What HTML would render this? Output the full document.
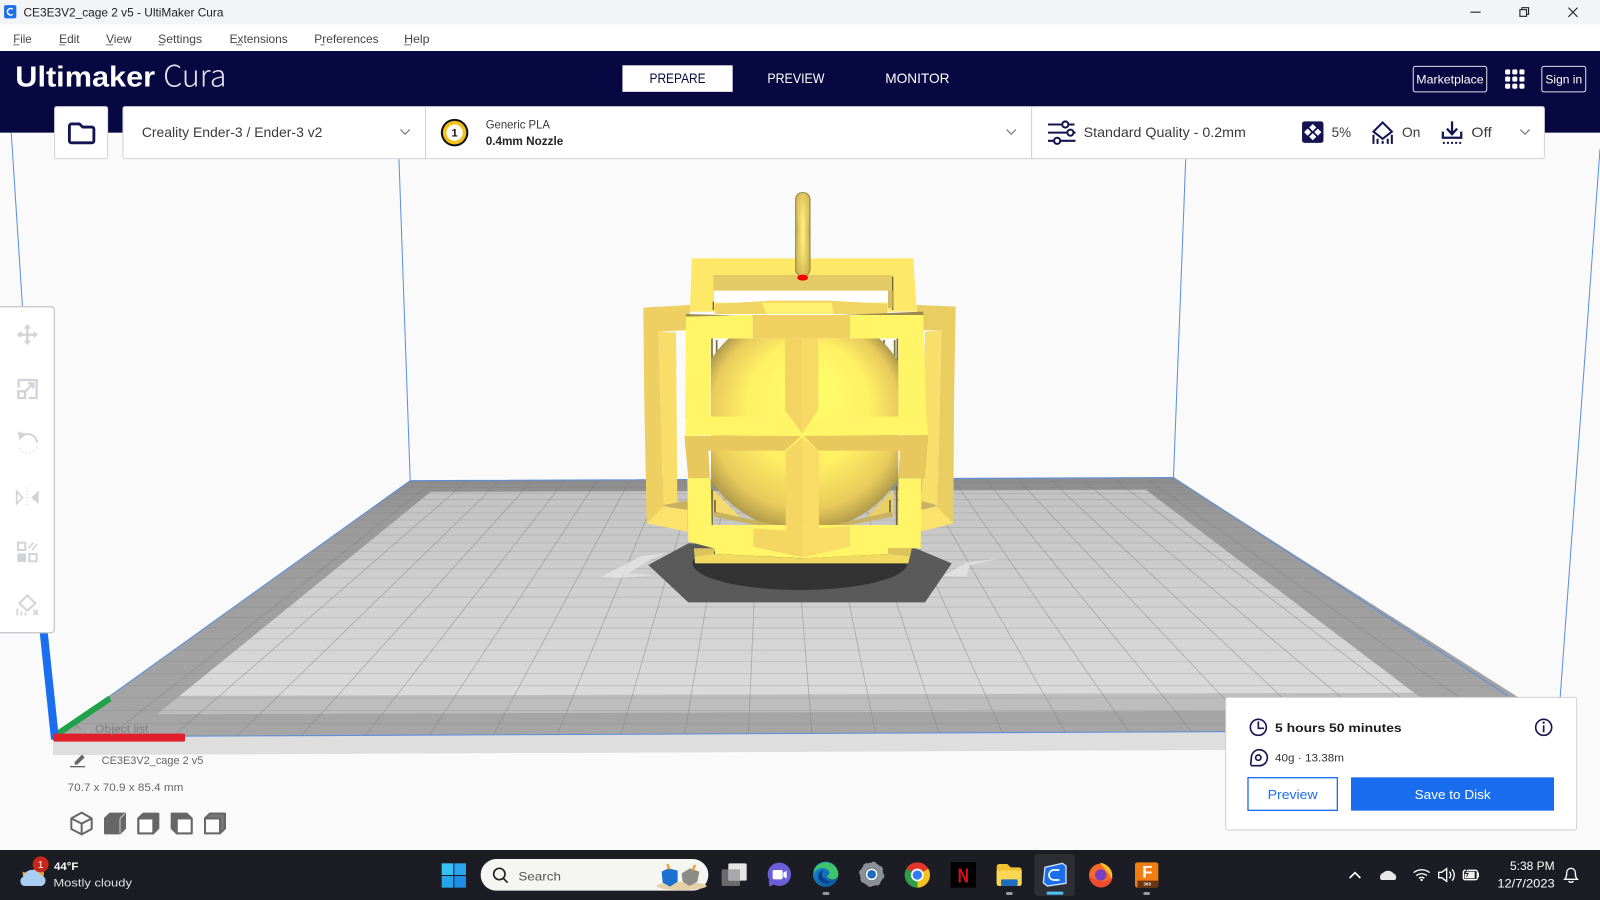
<!DOCTYPE html>
<html lang="en">
<head>
<meta charset="utf-8">
<title>CE3E3V2_cage 2 v5 - UltiMaker Cura</title>
<style>
html,body{margin:0;padding:0;background:#fafafa;width:1600px;height:900px;overflow:hidden}
svg{display:block;font-family:"Liberation Sans",sans-serif}
</style>
</head>
<body>
<svg xmlns="http://www.w3.org/2000/svg" width="1600" height="900" viewBox="0 0 1568 882">
<defs>
<clipPath id="bedclip"><polygon points="52,722 402,471 1150,468 1539,716"/></clipPath>
<clipPath id="sphereclip"><rect x="333" y="505" width="562" height="600"/></clipPath>
<linearGradient id="bedDark" x1="0" y1="0" x2="0" y2="1"><stop offset="0" stop-color="#8c8c8c"/><stop offset=".15" stop-color="#9a9a9a"/><stop offset="1" stop-color="#a6a6a6"/></linearGradient>
<linearGradient id="bedLight" x1="0" y1="0" x2="0" y2="1"><stop offset="0" stop-color="#c2c2c2"/><stop offset=".5" stop-color="#d0d0d0"/><stop offset="1" stop-color="#dadada"/></linearGradient>
<radialGradient id="sphere" cx="612" cy="750" r="333" gradientUnits="userSpaceOnUse" fx="640" fy="640">
<stop offset="0" stop-color="#ffff6a"/><stop offset=".55" stop-color="#fff064"/><stop offset=".85" stop-color="#e8cb5c"/><stop offset="1" stop-color="#b09a4a"/></radialGradient>
<linearGradient id="ring" x1="0" y1="0" x2="1" y2="0"><stop offset="0" stop-color="#c2a64e"/><stop offset=".5" stop-color="#fff27c"/><stop offset="1" stop-color="#c2a64e"/></linearGradient>
<linearGradient id="ringv" x1="0" y1="0" x2="0" y2="1"><stop offset="0" stop-color="#d8b850" stop-opacity=".8"/><stop offset=".45" stop-color="#fff27c" stop-opacity="0"/><stop offset="1" stop-color="#c8a848" stop-opacity=".7"/></linearGradient>
<linearGradient id="edge" x1="0" y1="0" x2="1" y2="1"><stop offset="0" stop-color="#1a8fd8"/><stop offset="1" stop-color="#0a4f96"/></linearGradient>
</defs>

<rect width="1568" height="882" fill="#fafafa"/>

<!-- build volume lines -->
<g stroke="#5a8fe2" stroke-width="1" fill="none">
<path d="M11 130L22 300M391 156L402 471M1162 156L1150 468M1568 146L1529 683"/>
</g>

<!-- lip -->
<polygon points="52,722 1205,717 1205,735 52,740" fill="#dedede"/>

<!-- bed -->
<polygon points="52,722 402,471 1150,468 1539,716" fill="url(#bedDark)"/>
<polygon points="154,700 176,682 1386,679 1410,696" fill="#bdbdbd"/>
<polygon points="176,682 422,482 1123,480 1386,679" fill="url(#bedLight)"/>
<g clip-path="url(#bedclip)" stroke="#7d7d7d" stroke-width=".8" stroke-opacity=".5" fill="none">
<path d="M394.4 471L43.6 722M426.2 471L106.3 722M458 471L169 722M489.8 471L231.7 722M521.6 471L294.4 722M553.4 471L357.1 722M585.2 471L419.8 722M617 471L482.5 722M648.8 471L545.2 722M680.6 471L607.9 722M712.4 471L670.6 722M744.2 471L733.3 722M776 471L796 722M807.8 471L858.7 722M839.6 471L921.4 722M871.4 471L984.1 722M903.2 471L1046.8 722M935 471L1109.5 722M966.8 471L1172.2 722M998.6 471L1234.9 722M1030.4 471L1297.6 722M1062.2 471L1360.3 722M1094 471L1423 722M1125.8 471L1485.7 722M1157.6 471L1548.4 722"/>
<path stroke-opacity=".3" d="M0 709H1568M0 696.3H1568M0 683.9H1568M0 671.8H1568M0 660H1568M0 648.4H1568M0 637.1H1568M0 626.1H1568M0 615.4H1568M0 605H1568M0 594.9H1568M0 585.1H1568M0 575.6H1568M0 566.3H1568M0 557.3H1568M0 548.6H1568M0 540.2H1568M0 532.1H1568M0 524.3H1568M0 516.8H1568M0 509.6H1568M0 502.7H1568M0 496H1568M0 489.6H1568M0 483.5H1568M0 477.7H1568M0 472.2H1568"/>
</g>
<path d="M52 722L402 471L1150 468L1478 682M52 722L1205 717" stroke="#5a8fe2" stroke-width="1" fill="none"/>

<!-- model : coordinates are 3x from (600,170) -->
<g transform="matrix(.32667 0 0 .32667 588 166.6)">
<!-- white streaks on bed -->
<polygon points="0,1222 125,1158 195,1150 150,1170 85,1210 160,1216 60,1224" fill="#e6e6e6" opacity=".75"/>
<polygon points="1030,1218 1100,1178 1200,1165 1110,1185 1100,1220" fill="#e6e6e6" opacity=".75"/>
<!-- shadow -->
<polygon points="145,1185 265,1120 935,1130 1055,1180 975,1297 265,1297" fill="#5a5a5a"/>
<ellipse cx="600" cy="1180" rx="322" ry="80" fill="#333"/>
<!-- side frames -->
<polygon points="130,413 270,405 270,480 175,485 190,1010 140,1060 133,700" fill="#edcf62"/>
<polygon points="175,485 228,488 232,1012 190,1010" fill="#f8dd68"/>
<polygon points="185,1006 262,992 262,1022" fill="#c9b160"/>
<polygon points="140,1060 190,1010 262,1020 262,1085" fill="#fbe26c"/>
<polygon points="1067,410 950,405 950,480 1025,482 1012,1010 1060,1060 1062,700" fill="#eacd60"/>
<polygon points="975,485 1025,482 1012,1010 965,1010" fill="#f8de6a"/>
<polygon points="1012,1006 960,992 960,1022" fill="#c9b160"/>
<polygon points="1060,1060 1012,1010 960,1020 960,1085" fill="#fbe26c"/>
<!-- back top frame -->
<polygon points="275,265 940,265 950,425 270,425" fill="#fde868"/>
<rect x="340" y="315" width="538" height="47" fill="#e4ca64"/>
<rect x="342" y="362" width="524" height="36" fill="#fff"/>
<polygon points="345,402 510,392 690,392 862,402 862,432 345,432" fill="#f0d562"/>
<polygon points="485,398 695,398 700,432 500,432" fill="#fff272"/>
<path d="M340 395V420M878 320V420" stroke="#6f6438" stroke-width="4"/>
<rect x="864" y="362" width="14" height="52" fill="#d5bc60"/>
<!-- ring -->
<rect x="587" y="68" width="43" height="250" rx="20" fill="url(#ring)" stroke="#8f8044" stroke-width="3"/>
<rect x="589" y="70" width="39" height="246" rx="18" fill="url(#ringv)"/>
<ellipse cx="608" cy="323" rx="16" ry="9" fill="#f50000"/>
<!-- window background details -->
<path d="M336 505V740M892 505V745M350 510V560M852 510V570M884 510V600" stroke="#7a6f40" stroke-width="5" fill="none"/>
<polygon points="340,960 420,1040 340,1040" fill="#f5d96c"/>
<polygon points="880,960 800,1040 880,1040" fill="#e8cf66"/>
<!-- sphere -->
<g clip-path="url(#sphereclip)"><circle cx="612" cy="750" r="333" fill="url(#sphere)"/></g>
<path d="M336 960V1065M890 950V1065M345 990V1040M870 990V1040" stroke="#6f6438" stroke-width="5" fill="none"/>
<polygon points="345,1025 555,1070 555,1082 340,1040" fill="#c9b162"/>
<polygon points="655,1075 875,1025 880,1040 660,1082" fill="#c9b162"/>
<!-- front frame -->
<polygon points="258,440 600,440 970,425 970,435 600,442 258,432" fill="#9a8a52"/>
<polygon points="258,440 458,435 458,505 332,505 332,740 255,745" fill="#fff566"/>
<polygon points="750,435 970,435 978,745 895,745 895,505 750,505" fill="#fff566"/>
<polygon points="458,435 750,435 750,505 458,505" fill="#efd060"/>
<polygon points="555,505 607,505 607,790 555,720" fill="#f3d462"/>
<polygon points="607,505 655,505 655,720 607,790" fill="#f7da66"/>
<polygon points="258,740 555,740 605,790 255,798" fill="#fff566"/>
<polygon points="655,740 980,740 985,795 610,795" fill="#fff566"/>
<polygon points="253,798 603,798 555,842 325,842 330,925 265,925" fill="#e8c85c"/>
<polygon points="612,798 985,795 975,925 895,925 900,842 655,842" fill="#e8c85c"/>
<polygon points="262,925 332,925 335,1065 895,1065 895,925 965,925 962,1135 865,1135 865,1152 610,1165 345,1152 342,1135 265,1115" fill="#fff566"/>
<polygon points="282,1135 342,1135 342,1152 605,1165 865,1152 865,1135 935,1135 925,1180 285,1180" fill="#f2da60"/>
<polygon points="282,1135 342,1135 342,1152 285,1160" fill="#dcc45c"/>
<polygon points="865,1135 935,1135 930,1160 865,1152" fill="#dcc45c"/>
<polygon points="557,845 607,802 607,1162 460,1130 460,1075 557,1082" fill="#f4d662"/>
<polygon points="607,802 657,845 657,1075 750,1068 750,1130 607,1162" fill="#f8dc66"/>
</g>

<!-- axis + object list : 3x from (0,680) -->
<g transform="matrix(.32667 0 0 .32667 0 666.4)">
<line x1="175" y1="160" x2="330" y2="55" stroke="#1fa24a" stroke-width="18"/>
<line x1="131" y1="-145" x2="165" y2="178" stroke="#1a6ef0" stroke-width="24"/>
<rect x="160" y="161" width="395" height="24" rx="5" fill="#e01f2a"/>
<path d="M222 148L232 138L242 148" stroke="#8b8b8b" stroke-width="3" fill="none"/>
<text x="285" y="158" font-size="33" fill="#808080" textLength="160" lengthAdjust="spacingAndGlyphs">Object list</text>
<path d="M224 246L246 224L254 232L232 254H224Z" fill="#666"/><rect x="210" y="258" width="45" height="4" fill="#666"/>
<text x="305" y="252" font-size="33" fill="#666" textLength="305" lengthAdjust="spacingAndGlyphs">CE3E3V2_cage 2 v5</text>
<text x="203" y="333" font-size="33" fill="#666" textLength="347" lengthAdjust="spacingAndGlyphs">70.7 x 70.9 x 85.4 mm</text>
<g stroke="#666" stroke-width="6" fill="none" stroke-linejoin="round">
<path d="M245 398L275 415V447L245 463L214 447V415ZM214 415L245 431L275 415M245 431V463"/>
<path d="M315 415L330 401H375V445L360 460H315Z" fill="#666"/><path d="M360 415V460M360 415L375 401" stroke="#fff" stroke-width="2"/>
<path d="M415 415L430 401H475V445L460 460H415Z" fill="#666"/><rect x="418" y="418" width="40" height="40" fill="#fff" stroke="none"/><path d="M415 415H460V460H415Z"/>
<path d="M515 401H560L575 415V460H530L515 445Z" fill="#666"/><rect x="533" y="418" width="40" height="40" fill="#fff" stroke="none"/><path d="M530 415H575V460H530Z"/>
<path d="M615 415L630 401H675V445L660 460H615Z"/><path d="M615 415H660V460M660 415L675 401"/><path d="M630 401H675V445L660 460V415H615Z" fill="#777"/>
</g>
</g>

<!-- left toolbar : 3x from (0,300) -->
<g transform="matrix(.32667 0 0 .32667 0 294)">
<rect x="-10" y="20" width="173" height="978" rx="10" fill="#fff" stroke="#c9cacf" stroke-width="4"/>
<g stroke="#d2d3d8" fill="none" stroke-width="7">
<path d="M60 104H104M82 82V126"/>
<path fill="#d2d3d8" stroke="none" d="M82 72L93 86H71ZM82 136L71 122H93ZM50 104L64 93V115ZM114 104L100 115V93Z"/>
<path d="M56 262V240H110V294H86"/><path d="M72 278L100 250M84 250H100V266"/><rect x="55" y="274" width="20" height="20"/>
<path d="M62 410A30 30 0 0 1 112 428" stroke-width="6"/><path fill="#d2d3d8" stroke="none" d="M54 394L80 402L58 420Z"/>
<path d="M110 442A30 30 0 0 1 54 436" stroke-dasharray="3 9" stroke-width="5"/>
<path d="M81 562V622" stroke-dasharray="3 7" stroke-width="4"/>
<path stroke-width="5" d="M50 574L68 593L50 611Z"/><path fill="#d2d3d8" stroke="none" d="M116 572V612L94 593Z"/>
<rect x="54" y="728" width="22" height="22" stroke-width="6"/><path stroke-width="5" d="M85 745L100 728M96 750L112 732"/>
<rect x="52" y="760" width="26" height="26" rx="3" fill="#d2d3d8" stroke="none"/><rect x="88" y="762" width="22" height="22" stroke-width="6"/>
<path d="M82 886L106 910L82 932L58 910Z" stroke-width="6"/>
<path d="M52 925V946M64 934V946M76 938V946" stroke-width="5"/><path d="M100 930L114 945M114 930L100 945" stroke-width="5"/>
</g>
</g>

<!-- title bar -->
<rect x="0" y="0" width="1568" height="24" fill="#f2f4f7"/>
<rect x="4" y="5" width="12" height="13" rx="2" fill="#1c6fe8"/>
<path d="M12.5 9A3.2 3.2 0 1 0 12.5 14" stroke="#fff" stroke-width="1.5" fill="none"/>
<text x="23" y="16" font-size="12" fill="#222" textLength="196" lengthAdjust="spacingAndGlyphs">CE3E3V2_cage 2 v5 - UltiMaker Cura</text>
<path d="M1441 12H1451M1537 7.5L1546 16.5M1546 7.5L1537 16.5" stroke="#222" stroke-width="1.1" fill="none"/>
<path d="M1489.5 9.5H1496V16H1489.5ZM1491.5 9.5V7.5H1498V14H1496" stroke="#222" stroke-width="1.1" fill="none"/>

<!-- menu bar -->
<rect x="0" y="24" width="1568" height="26" fill="#fff"/>
<g font-size="12" fill="#444">
<text x="13" y="42" textLength="18" lengthAdjust="spacingAndGlyphs">File</text>
<text x="58" y="42" textLength="20" lengthAdjust="spacingAndGlyphs">Edit</text>
<text x="104" y="42" textLength="25" lengthAdjust="spacingAndGlyphs">View</text>
<text x="155" y="42" textLength="43" lengthAdjust="spacingAndGlyphs">Settings</text>
<text x="225" y="42" textLength="57" lengthAdjust="spacingAndGlyphs">Extensions</text>
<text x="308" y="42" textLength="63" lengthAdjust="spacingAndGlyphs">Preferences</text>
<text x="396" y="42" textLength="25" lengthAdjust="spacingAndGlyphs">Help</text>
</g>
<path d="M13 44H19M58 44H64M104 44H111M155 44H161M231 44H237M314 44H318M396 44H403" stroke="#444" stroke-width=".8"/>

<!-- header -->
<rect x="0" y="50" width="1568" height="80" fill="#070841"/>
<text x="15" y="85" font-size="28" font-weight="700" fill="#fff" textLength="137" lengthAdjust="spacingAndGlyphs">Ultimaker</text>
<text x="160" y="85" font-size="29" fill="#e4e5ee" textLength="62" lengthAdjust="spacingAndGlyphs" style='font-family:"Noto Sans CJK JP","Liberation Sans",sans-serif;font-weight:300'>Cura</text>
<rect x="610" y="64" width="108" height="26" fill="#fff"/>
<text x="664" y="81.5" font-size="14" fill="#070841" text-anchor="middle" textLength="55" lengthAdjust="spacingAndGlyphs">PREPARE</text>
<text x="780" y="81.5" font-size="14" fill="#fff" text-anchor="middle" textLength="56" lengthAdjust="spacingAndGlyphs">PREVIEW</text>
<text x="899" y="81.5" font-size="14" fill="#fff" text-anchor="middle" textLength="63" lengthAdjust="spacingAndGlyphs">MONITOR</text>
<rect x="1385" y="65" width="72" height="25" rx="2" fill="none" stroke="#dfe0ea"/>
<text x="1421" y="82" font-size="12" fill="#fff" text-anchor="middle" textLength="66" lengthAdjust="spacingAndGlyphs">Marketplace</text>
<g fill="#fff">
<rect x="1475" y="68" width="5" height="5" rx="1.5"/><rect x="1482" y="68" width="5" height="5" rx="1.5"/><rect x="1489" y="68" width="5" height="5" rx="1.5"/>
<rect x="1475" y="75" width="5" height="5" rx="1.5"/><rect x="1482" y="75" width="5" height="5" rx="1.5"/><rect x="1489" y="75" width="5" height="5" rx="1.5"/>
<rect x="1475" y="82" width="5" height="5" rx="1.5"/><rect x="1482" y="82" width="5" height="5" rx="1.5"/><rect x="1489" y="82" width="5" height="5" rx="1.5"/>
</g>
<rect x="1511" y="65" width="43" height="25" rx="2" fill="none" stroke="#dfe0ea"/>
<text x="1532.5" y="82" font-size="12" fill="#fff" text-anchor="middle" textLength="36" lengthAdjust="spacingAndGlyphs">Sign in</text>

<!-- top selectors -->
<rect x="53.5" y="104.5" width="52" height="51" rx="2" fill="#fff" stroke="#d2d2d6"/>
<path d="M68 123.5A2 2 0 0 1 70 121.5H78L81 124.5H90A2 2 0 0 1 92 126.5V138A2 2 0 0 1 90 140H70A2 2 0 0 1 68 138Z" fill="none" stroke="#141550" stroke-width="2.8" stroke-linejoin="round"/>
<rect x="120.5" y="104.5" width="1393" height="51" rx="2" fill="#fff" stroke="#d2d2d6"/>
<path d="M417 104V156M1011 104V156" stroke="#cfcfd4" stroke-width="1"/>
<text x="139" y="134.5" font-size="14" fill="#3a3a3a" textLength="177" lengthAdjust="spacingAndGlyphs">Creality Ender-3 / Ender-3 v2</text>
<path d="M392.5 127L397 131.5L401.5 127M986.5 127L991 131.5L995.5 127M1490 127L1494.5 131.5L1499 127" stroke="#777" stroke-width="1.2" fill="none"/>
<circle cx="445.5" cy="130" r="13.5" fill="#111"/>
<circle cx="445.5" cy="130" r="11.5" fill="#f2c21a"/>
<circle cx="445.5" cy="130" r="8" fill="#fff"/>
<text x="445.5" y="134" font-size="11" font-weight="700" fill="#111" text-anchor="middle">1</text>
<text x="476" y="126" font-size="11.5" fill="#3a3a3a" textLength="63" lengthAdjust="spacingAndGlyphs">Generic PLA</text>
<text x="476" y="142" font-size="12" fill="#222" font-weight="700" textLength="76" lengthAdjust="spacingAndGlyphs">0.4mm Nozzle</text>
<g stroke="#141550" stroke-width="2" fill="none">
<path d="M1027 122H1041M1047 122H1053M1027 130H1046M1052 130H1054M1027 138H1033M1039 138H1054"/>
<circle cx="1044" cy="122" r="3"/><circle cx="1049" cy="130" r="3"/><circle cx="1036" cy="138" r="3"/>
</g>
<text x="1062" y="134.5" font-size="14" fill="#3a3a3a" textLength="159" lengthAdjust="spacingAndGlyphs">Standard Quality - 0.2mm</text>
<rect x="1276" y="119" width="21" height="21" rx="2.5" fill="#141550"/>
<path fill="#fff" d="M1286.5 121.5L1290 125L1286.5 128.5L1283 125ZM1286.5 130.5L1290 134L1286.5 137.5L1283 134ZM1281.5 126L1285 129.5L1281.5 133L1278 129.5ZM1291.5 126L1295 129.5L1291.5 133L1288 129.5Z"/>
<text x="1305" y="134.5" font-size="14" fill="#3a3a3a" textLength="19" lengthAdjust="spacingAndGlyphs">5%</text>
<path d="M1355 120L1364 129L1355 136L1346 129Z" fill="none" stroke="#141550" stroke-width="2"/>
<path d="M1346 132V141M1350 136V141M1355 138V141M1360 136V141M1364 132V141" stroke="#141550" stroke-width="2"/>
<text x="1374" y="134.5" font-size="14" fill="#3a3a3a" textLength="18" lengthAdjust="spacingAndGlyphs">On</text>
<path d="M1423 119V131M1418 126L1423 131.5L1428 126M1414 129V135H1432V129" fill="none" stroke="#141550" stroke-width="2.2"/>
<path d="M1414 140H1433" stroke="#141550" stroke-width="2" stroke-dasharray="2 2"/>
<text x="1442" y="134.5" font-size="14" fill="#3a3a3a" textLength="20" lengthAdjust="spacingAndGlyphs">Off</text>

<!-- taskbar -->
<rect x="0" y="833" width="1568" height="49" fill="#1c1c24"/>

<!-- print panel + tray : 3x from (1200,680) -->
<g transform="matrix(.32667 0 0 .32667 1176 666.4)">
<rect x="77" y="52" width="1053" height="398" rx="6" fill="#fff" stroke="#cfcfd3" stroke-width="3"/>
<g stroke="#1a1850" fill="none" stroke-width="5">
<circle cx="175" cy="142" r="24"/><path d="M175 124V145H192"/>
<circle cx="1031" cy="142" r="24"/>
<path d="M152 255L154 233A24 24 0 1 1 175 257H152"/>
<circle cx="175" cy="233" r="8"/>
</g>
<path d="M1031 136V157" stroke="#1a1850" stroke-width="5"/><circle cx="1031" cy="128" r="3.5" fill="#1a1850"/>
<text x="225" y="156" font-size="37" font-weight="700" fill="#1a1a1a" textLength="380" lengthAdjust="spacingAndGlyphs">5 hours 50 minutes</text>
<text x="225" y="245" font-size="33" fill="#333" textLength="207" lengthAdjust="spacingAndGlyphs">40g · 13.38m</text>
<rect x="144" y="293" width="268" height="98" fill="#fff" stroke="#1a6ef0" stroke-width="4"/>
<text x="278" y="357" font-size="38" fill="#1a6ef0" text-anchor="middle" textLength="150" lengthAdjust="spacingAndGlyphs">Preview</text>
<rect x="453" y="292" width="609" height="100" fill="#196ef0"/>
<text x="758" y="357" font-size="38" fill="#fff" text-anchor="middle" textLength="228" lengthAdjust="spacingAndGlyphs">Save to Disk</text>
<path d="M449 594L465 578L481 594" fill="none" stroke="#fff" stroke-width="5"/>
<path d="M543 600A14 14 0 0 1 550 578A20 20 0 0 1 580 580A12 12 0 0 1 585 600Z" fill="#e8e8ec"/>
<g fill="none" stroke="#fff" stroke-width="4">
<path d="M641 578A38 38 0 0 1 689 578M649 587A25 25 0 0 1 681 587M657 595A12 12 0 0 1 673 595"/>
<path d="M716 577H725L740 566V604L725 593H716ZM748 575A14 14 0 0 1 748 595M756 568A25 25 0 0 1 756 602"/>
<rect x="790" y="571" width="42" height="28" rx="5"/>
<path d="M835 578V592"/>
</g>
<circle cx="665" cy="600" r="3.5" fill="#fff"/>
<rect x="794" y="575" width="30" height="20" fill="#eee"/>
<path d="M804 560L795 580H804L800 590" stroke="#1c1c24" stroke-width="3" fill="none"/>
<text x="1064" y="570" font-size="36" fill="#fff" text-anchor="end" textLength="134" lengthAdjust="spacingAndGlyphs">5:38 PM</text>
<text x="1064" y="622" font-size="36" fill="#fff" text-anchor="end" textLength="172" lengthAdjust="spacingAndGlyphs">12/7/2023</text>
<path d="M1094 598C1100 592 1100 585 1100 578A13 13 0 0 1 1126 578C1126 585 1126 592 1132 598ZM1106 603A8 8 0 0 0 1120 603" fill="none" stroke="#fff" stroke-width="4"/>
</g>

<!-- weather -->
<g transform="matrix(.32667 0 0 .32667 0 666.4)">
<path d="M68 575A28 28 0 0 0 108 548A32 32 0 1 1 68 575Z" fill="#f4a72a"/>
<path d="M72 618A15 15 0 0 1 70 590A28 28 0 0 1 122 585A17 17 0 0 1 125 618Z" fill="#a9cdf0"/>
<circle cx="122" cy="553" r="24" fill="#c8281c"/>
<text x="122" y="564" font-size="30" fill="#fff" text-anchor="middle">1</text>
<text x="162" y="570" font-size="33" fill="#fff" font-weight="700" textLength="73" lengthAdjust="spacingAndGlyphs">44°F</text>
<text x="160" y="620" font-size="34" fill="#e0e0e2" textLength="236" lengthAdjust="spacingAndGlyphs">Mostly cloudy</text>
</g>

<!-- taskbar centre : 3x from (420,840) -->
<g transform="matrix(.32667 0 0 .32667 411.6 823.2)">
<rect x="65" y="70" width="35" height="35" fill="#37c0f5"/><rect x="103" y="70" width="35" height="35" fill="#2ba4ee"/>
<rect x="65" y="108" width="35" height="35" fill="#25a5ec"/><rect x="103" y="108" width="35" height="35" fill="#1c8fe4"/>
<rect x="182" y="57" width="683" height="95" rx="47" fill="#f5f5f2"/>
<circle cx="238" cy="102" r="17" fill="none" stroke="#222" stroke-width="5"/>
<path d="M250 115L263 128" stroke="#222" stroke-width="5"/>
<text x="295" y="122" font-size="36" fill="#555" textLength="128" lengthAdjust="spacingAndGlyphs">Search</text>
<ellipse cx="785" cy="138" rx="75" ry="12" fill="#e5cfa5"/>
<path d="M725 95L745 85L773 92V125L750 140L728 128Z" fill="#1d6fd0"/>
<path d="M742 72L748 88" stroke="#e8a030" stroke-width="7"/>
<path d="M785 100L810 85L838 95L832 125L808 138L788 125Z" fill="#8c8c86"/>
<path d="M825 75L818 92" stroke="#e8a030" stroke-width="7"/>
<rect x="905" y="88" width="55" height="50" rx="4" fill="#6a6a6e"/>
<rect x="925" y="70" width="55" height="52" rx="4" fill="#e6e6e8"/>
<rect x="925" y="88" width="35" height="34" fill="#a8a8ac"/>
<circle cx="1078" cy="103" r="35" fill="#6a5fd8"/>
<path d="M1046 120L1048 140L1065 132Z" fill="#6a5fd8"/>
<rect x="1058" y="90" width="30" height="28" rx="5" fill="#fff"/>
<path d="M1090 98L1100 92V116L1090 110Z" fill="#fff"/>
</g>

<!-- taskbar apps : 3x from (800,840) -->
<g transform="matrix(.32667 0 0 .32667 784 823.2)">
<rect x="703" y="42" width="122" height="126" rx="9" fill="#2d2d35"/>
<circle cx="77" cy="103" r="38" fill="url(#edge)"/>
<path d="M42 90A38 38 0 0 1 115 105C112 122 85 122 80 108C100 100 78 78 60 85C50 88 45 92 42 100Z" fill="#3ec46d"/>
<path d="M62 125C48 112 55 92 72 90C60 100 65 120 92 125C85 132 72 132 62 125Z" fill="#0d3f8a"/>
<circle cx="215" cy="103" r="27" fill="none" stroke="#8c9098" stroke-width="16"/>
<circle cx="215" cy="103" r="34" fill="none" stroke="#8c9098" stroke-width="8" stroke-dasharray="12 14.7"/>
<circle cx="215" cy="103" r="18" fill="#fff"/>
<circle cx="215" cy="103" r="13" fill="#1d6cc0"/>
<path d="M352 105L319.1 86A38 38 0 0 1 384.9 86Z" fill="#e0362c"/>
<path d="M352 105L352 143A38 38 0 0 1 319.1 86Z" fill="#2f9e48"/>
<path d="M352 105L384.9 86A38 38 0 0 1 352 143Z" fill="#f6c222"/>
<circle cx="352" cy="105" r="19" fill="#fff"/><circle cx="352" cy="105" r="14" fill="#2f7bf0"/>
<rect x="452" y="67" width="76" height="76" fill="#000"/>
<text x="490" y="128" font-size="62" font-weight="700" fill="#d8101c" text-anchor="middle" textLength="34" lengthAdjust="spacingAndGlyphs">N</text>
<path d="M590 80A8 8 0 0 1 598 72H622L632 82H657A8 8 0 0 1 665 90V130A8 8 0 0 1 657 138H598A8 8 0 0 1 590 130Z" fill="#f2c230"/>
<path d="M590 92H665V130A8 8 0 0 1 657 138H598A8 8 0 0 1 590 130Z" fill="#fbd755"/>
<rect x="603" y="118" width="50" height="20" rx="3" fill="#1e6fc0"/>
<path d="M735 82L787 70L798 78V130L742 138L730 128Z" fill="#1c6fe8" stroke="#cfe0fa" stroke-width="4"/>
<path d="M778 90H762A14 14 0 0 0 762 120H778" stroke="#fff" stroke-width="5" fill="none"/>
<rect x="740" y="155" width="50" height="9" rx="4" fill="#4fc3f7"/>
<circle cx="902" cy="106" r="35" fill="#f36a2b"/>
<path d="M900 68C925 72 942 95 935 118C925 95 910 85 900 68Z" fill="#fbc02d"/>
<circle cx="902" cy="105" r="17" fill="#7a3fc0"/>
<path d="M868 105A35 35 0 0 0 938 110C925 128 895 132 868 105Z" fill="#ef4d2f"/>
<rect x="1005" y="67" width="70" height="76" rx="7" fill="#f07e12"/>
<path d="M1012 122H1075V136A7 7 0 0 1 1068 143H1012Z" fill="#6a3510"/>
<text x="1042" y="112" font-size="50" font-weight="700" fill="#fff" text-anchor="middle">F</text>
<text x="1042" y="137" font-size="14" font-weight="700" fill="#eee" text-anchor="middle">360</text>
<g fill="#9a9a9e">
<rect x="68" y="156" width="20" height="9" rx="4"/><rect x="618" y="156" width="20" height="9" rx="4"/><rect x="1030" y="156" width="20" height="9" rx="4"/>
</g>
</g>
</svg>
</body>
</html>
